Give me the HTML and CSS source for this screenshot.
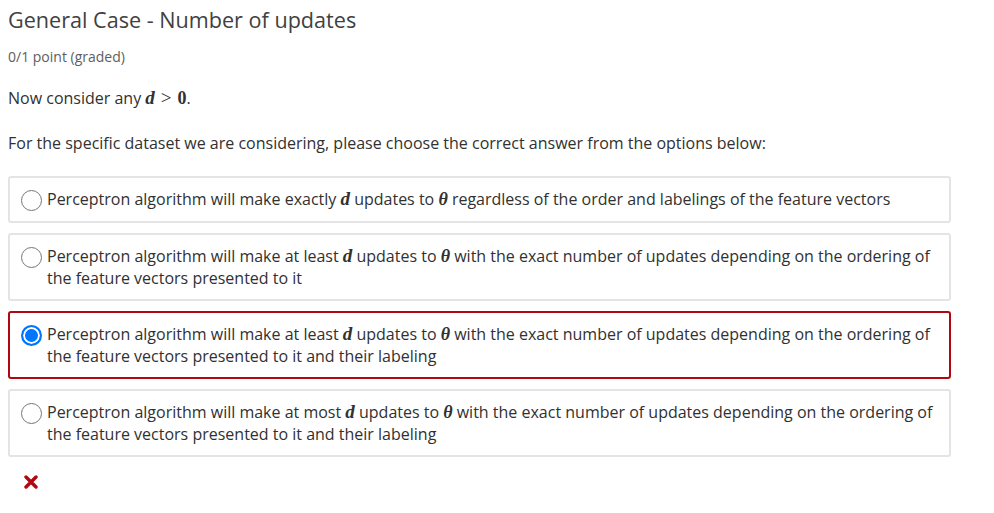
FILE: index.html
```html
<!DOCTYPE html>
<html>
<head>
<meta charset="utf-8">
<link rel="stylesheet" href="styles.css">
</head>
<body>
<div class="problem">
  <h3 class="title">General Case - Number of updates</h3>
  <div class="points">0/1 point (graded)</div>
  <p class="para">Now consider any <span class="mi">d</span><span class="mo">&gt;</span><span class="mn">0</span>.</p>
  <p class="para">For the specific dataset we are considering, please choose the correct answer from the options below:</p>
  <div class="options">
    <label class="option">
      <span class="radio"></span>
      <span class="otext">Perceptron algorithm will make exactly <span class="mi">d</span> updates to <span class="mi th">θ</span> regardless of the order and labelings of the feature vectors</span>
    </label>
    <label class="option">
      <span class="radio"></span>
      <span class="otext">Perceptron algorithm will make at least <span class="mi">d</span> updates to <span class="mi th">θ</span> with the exact number of updates depending on the ordering of the feature vectors presented to it</span>
    </label>
    <label class="option selected">
      <span class="radio checked"></span>
      <span class="otext">Perceptron algorithm will make at least <span class="mi">d</span> updates to <span class="mi th">θ</span> with the exact number of updates depending on the ordering of the feature vectors presented to it and their labeling</span>
    </label>
    <label class="option">
      <span class="radio"></span>
      <span class="otext">Perceptron algorithm will make at most <span class="mi">d</span> updates to <span class="mi th">θ</span> with the exact number of updates depending on the ordering of the feature vectors presented to it and their labeling</span>
    </label>
  </div>
  <div class="status">
    <svg width="14" height="14" viewBox="0 0 14 14"><path d="M2 2 L12 12 M12 2 L2 12" stroke="#b20610" stroke-width="3.4" stroke-linecap="round"/></svg>
  </div>
</div>
</body>
</html>
```
FILE: styles.css
```css
html, body {
  margin: 0;
  padding: 0;
  background: #fff;
}
body {
  font-family: "Open Sans", "Liberation Sans", sans-serif;
  color: #313131;
}
.problem {
  padding: 4px 43px 0 8px;
}
.title {
  margin: 0;
  font-size: 21.6px;
  font-weight: 400;
  color: #414141;
  line-height: 32px;
}
.points {
  margin-top: 11px;
  font-size: 14px;
  color: #5e5e5e;
  line-height: 20px;
}
.para {
  margin: 19px 0 0 0;
  font-size: 16px;
  line-height: 24px;
}
.para + .para {
  margin-top: 21px;
}
.mi {
  font-family: "Liberation Serif", "DejaVu Serif", serif;
  font-style: italic;
  font-weight: 700;
  font-size: 19px;
  line-height: 0;
}
.mi.th {
  font-size: 18px;
}
.mo {
  font-family: "Liberation Serif", serif;
  font-size: 19px;
  line-height: 0;
  margin: 0 6px;
}
.mn {
  font-family: "Liberation Serif", serif;
  font-size: 18px;
  font-weight: 700;
  line-height: 0;
}
.options {
  margin-top: 21px;
  display: flex;
  flex-direction: column;
  gap: 10px;
}
.option {
  display: flex;
  align-items: flex-start;
  border: 2px solid #e4e4e4;
  border-radius: 3px;
  padding: 10px 10px 10px 11px;
  font-size: 16px;
  line-height: 22px;
}
.option.selected {
  border-color: #b20610;
}
.radio {
  flex: none;
  width: 21px;
  height: 21px;
  border: 1px solid #767676;
  border-radius: 50%;
  box-sizing: border-box;
  margin: 2px 5px 0 0;
}
.radio.checked {
  border: 2px solid #0075ff;
  background: #0075ff;
  box-shadow: inset 0 0 0 2px #fff;
}
.otext {
  flex: 1;
}
.status {
  margin: 18px 0 0 16px;
  height: 14px;
}
.status svg {
  display: block;
}
```
